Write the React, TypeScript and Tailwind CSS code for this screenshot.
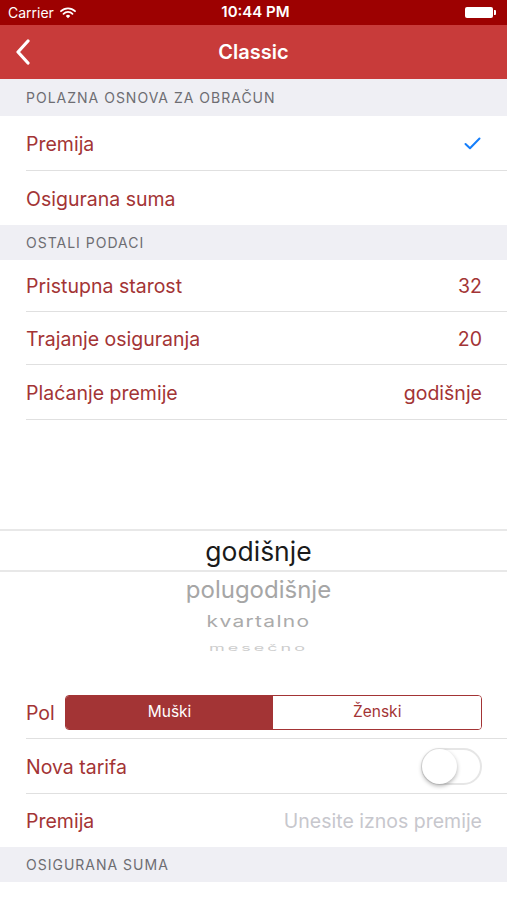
import React from "react";

const font = { fontFamily: "Inter, 'Noto Sans', 'Liberation Sans', sans-serif" };

function Header({ title, h }: { title: string; h: string }) {
  return (
    <div className={`${h} w-full bg-[#efeff4] flex items-center pl-[26px] text-[14px] text-[#6d6d72] tracking-[1px]`}>
      {title}
    </div>
  );
}

function Cell({ children, sep = true, h }: { children: React.ReactNode; sep?: boolean; h: string }) {
  return (
    <div className={`flex ${h} pl-[26px] bg-white`}>
      <div className={`flex flex-1 items-center pr-[25px] pt-[3px] ${sep ? "border-b border-[#e0e0e0]" : ""}`}>
        {children}
      </div>
    </div>
  );
}

const label = "text-[19.5px] text-[#a33435]";

function Row({ text, value, check, sep = true, h }: { text: string; value?: string; check?: boolean; sep?: boolean; h: string }) {
  return (
    <Cell sep={sep} h={h}>
      <span className={`flex-1 ${label}`}>{text}</span>
      {value && <span className={label}>{value}</span>}
      {check && (
        <svg width="17" height="13" viewBox="0 0 17 13" className="mr-[1px] -mt-[3px]">
          <path d="M1.5 7 L6 11.3 L15.5 1.5" fill="none" stroke="#147efb" strokeWidth="2" strokeLinecap="round" strokeLinejoin="round" />
        </svg>
      )}
    </Cell>
  );
}

export default function App() {
  return (
    <div className="w-[507px] h-[900px] bg-white overflow-hidden" style={font}>
      {/* status bar */}
      <div className="h-[25px] bg-[#9d0101] flex items-center px-[8px] text-white relative">
        <span className="text-[14px]">Carrier</span>
        <svg width="16" height="12" viewBox="0 0 16 12" className="ml-[6px]">
          <path d="M1 4.2 A10 10 0 0 1 15 4.2" fill="none" stroke="white" strokeWidth="1.8" strokeLinecap="round" />
          <path d="M3.5 6.8 A6.3 6.3 0 0 1 12.5 6.8" fill="none" stroke="white" strokeWidth="1.8" strokeLinecap="round" />
          <path d="M8 11.2 L5.8 8.9 A3.2 3.2 0 0 1 10.2 8.9 Z" fill="white" />
        </svg>
        <span className="absolute left-0 right-0 text-center text-[15px] font-semibold pointer-events-none pl-[4px]">10:44 PM</span>
        <div className="ml-auto flex items-center mr-[3px]">
          <div className="w-[28px] h-[11px] bg-white rounded-[2px]" />
          <div className="w-[2px] h-[5px] bg-white rounded-r-[1px] ml-[1px]" />
        </div>
      </div>
      {/* nav bar */}
      <div className="h-[54px] bg-[#c83b3a] flex items-center relative">
        <svg width="16" height="26" viewBox="0 0 16 26" className="ml-[15px]">
          <path d="M13 2 L3 13 L13 24" fill="none" stroke="white" strokeWidth="3.2" strokeLinecap="round" strokeLinejoin="round" />
        </svg>
        <span className="absolute left-0 right-0 text-center text-white text-[20px] font-semibold">Classic</span>
      </div>

      <Header title="POLAZNA OSNOVA ZA OBRAČUN" h="h-[37px]" />
      <Row text="Premija" check h="h-[55px]" />
      <Row text="Osigurana suma" sep={false} h="h-[54px]" />
      <Header title="OSTALI PODACI" h="h-[35px]" />
      <Row text="Pristupna starost" value="32" h="h-[52px]" />
      <Row text="Trajanje osiguranja" value="20" h="h-[53px]" />
      <Row text="Plaćanje premije" value="godišnje" h="h-[55px]" />

      {/* picker */}
      <div className="h-[266px] flex flex-col bg-white">
        <div className="h-[109px]" />
        <div className="h-[43px] border-t-[2px] border-b-[2px] border-[#e8e8e8] flex items-center justify-center pl-[10px]">
          <span className="text-[26.5px] text-[#1a1a1a] pt-[2px]">godišnje</span>
        </div>
        <div className="flex flex-col items-center pl-[10px]">
          <span className="text-[24px] text-[#a6a6a6] leading-[36px]">polugodišnje</span>
          <span className="text-[21px] text-[#ababab] leading-[24px] mt-[2px] scale-y-[0.78] tracking-[1.3px]">kvartalno</span>
          <span className="text-[18px] text-[#cdcdcd] leading-[16px] mt-[6px] scale-y-[0.5] tracking-[3px]">mesečno</span>
        </div>
      </div>

      {/* Pol */}
      <div className="flex h-[53px] pl-[26px] bg-white">
        <div className="flex flex-1 items-center pr-[25px] border-b border-[#e0e0e0]">
          <span className={`${label} mr-[10px] pt-[3px]`}>Pol</span>
          <div className="flex flex-1 h-[35px] border border-[#a33435] rounded-[4px] overflow-hidden">
            <div className="flex-1 bg-[#a33435] text-white text-[15.5px] flex items-center justify-center">Muški</div>
            <div className="flex-1 bg-white text-[#a33435] text-[15.5px] flex items-center justify-center">Ženski</div>
          </div>
        </div>
      </div>
      {/* Nova tarifa */}
      <div className="flex h-[55px] pl-[26px] bg-white">
        <div className="flex flex-1 items-center pr-[25px] border-b border-[#e0e0e0]">
          <span className={`flex-1 ${label} pt-[3px]`}>Nova tarifa</span>
          <div className="w-[61px] h-[37px] rounded-full border-[2px] border-[#e6e6e6] bg-white flex items-center">
            <div className="w-[35px] h-[35px] rounded-full bg-white shadow-[0_2px_4px_rgba(0,0,0,0.3)] -ml-[1px]" />
          </div>
        </div>
      </div>
      {/* Premija input */}
      <Cell sep={false} h="h-[53px]">
        <span className={`flex-1 ${label}`}>Premija</span>
        <span className="text-[19.5px] text-[#c7c7cd]">Unesite iznos premije</span>
      </Cell>
      <Header title="OSIGURANA SUMA" h="h-[35px]" />
    </div>
  );
}
